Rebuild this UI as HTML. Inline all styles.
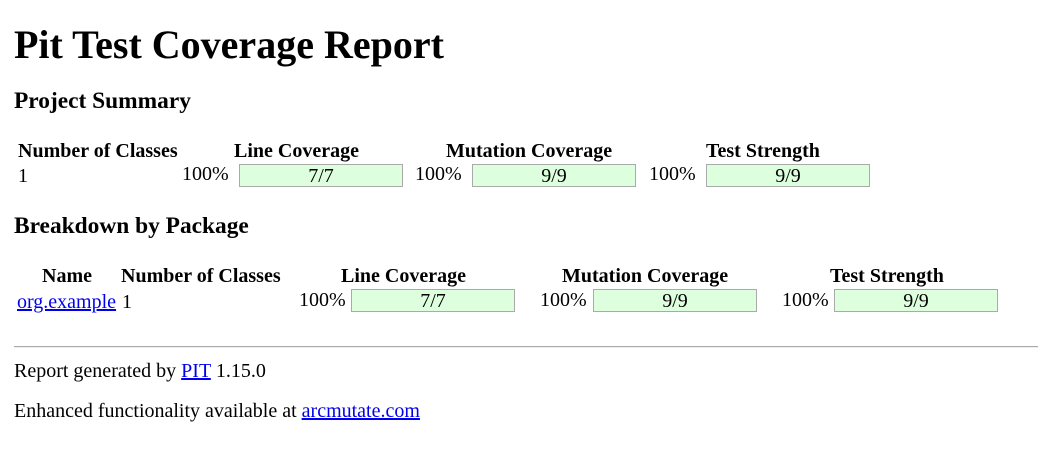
<!DOCTYPE html>
<html><head><meta charset="utf-8"><style>
body{margin:0;width:1038px;height:455px;background:#fff;font-family:"Liberation Serif",serif;font-size:20px;color:#000;position:relative;overflow:hidden}
.a{position:absolute;line-height:1;white-space:nowrap}
.b{font-weight:bold}
.bar{position:absolute;width:162px;height:21px;background:#DFD;border:1px solid #AAA;text-align:center;line-height:22px}
a{color:#00e;text-decoration:underline}
hr{position:absolute;left:14px;top:346px;width:1024px;margin:0;border:0;border-top:1px solid #aaa;border-bottom:1px solid #eee;height:0}
</style></head><body>
<div class="a b" style="left:14px;top:25px;font-size:40px">Pit Test Coverage Report</div>
<div class="a b" style="left:14px;top:90px;font-size:23.4px">Project Summary</div>
<div class="a b" style="left:18px;top:141px">Number of Classes</div>
<div class="a b" style="left:234px;top:141px">Line Coverage</div>
<div class="a b" style="left:446px;top:141px">Mutation Coverage</div>
<div class="a b" style="left:706px;top:141px">Test Strength</div>
<div class="a" style="left:18px;top:166px">1</div>
<div class="a" style="left:182px;top:164px">100%</div>
<div class="bar" style="left:239px;top:164px">7/7</div>
<div class="a" style="left:415px;top:164px">100%</div>
<div class="bar" style="left:472px;top:164px">9/9</div>
<div class="a" style="left:649px;top:164px">100%</div>
<div class="bar" style="left:706px;top:164px">9/9</div>

<div class="a b" style="left:14px;top:215px;font-size:23.4px">Breakdown by Package</div>
<div class="a b" style="left:42px;top:266px">Name</div>
<div class="a b" style="left:121px;top:266px">Number of Classes</div>
<div class="a b" style="left:341px;top:266px">Line Coverage</div>
<div class="a b" style="left:562px;top:266px">Mutation Coverage</div>
<div class="a b" style="left:830px;top:266px">Test Strength</div>
<div class="a" style="left:17px;top:292px"><a>org.example</a></div>
<div class="a" style="left:122px;top:292px">1</div>
<div class="a" style="left:299px;top:290px">100%</div>
<div class="bar" style="left:351px;top:289px">7/7</div>
<div class="a" style="left:540px;top:290px">100%</div>
<div class="bar" style="left:593px;top:289px">9/9</div>
<div class="a" style="left:782px;top:290px">100%</div>
<div class="bar" style="left:834px;top:289px">9/9</div>

<hr>
<div class="a" style="left:14px;top:361px">Report generated by <a>PIT</a> 1.15.0</div>
<div class="a" style="left:14px;top:401px">Enhanced functionality available at <a>arcmutate.com</a></div>
</body></html>
